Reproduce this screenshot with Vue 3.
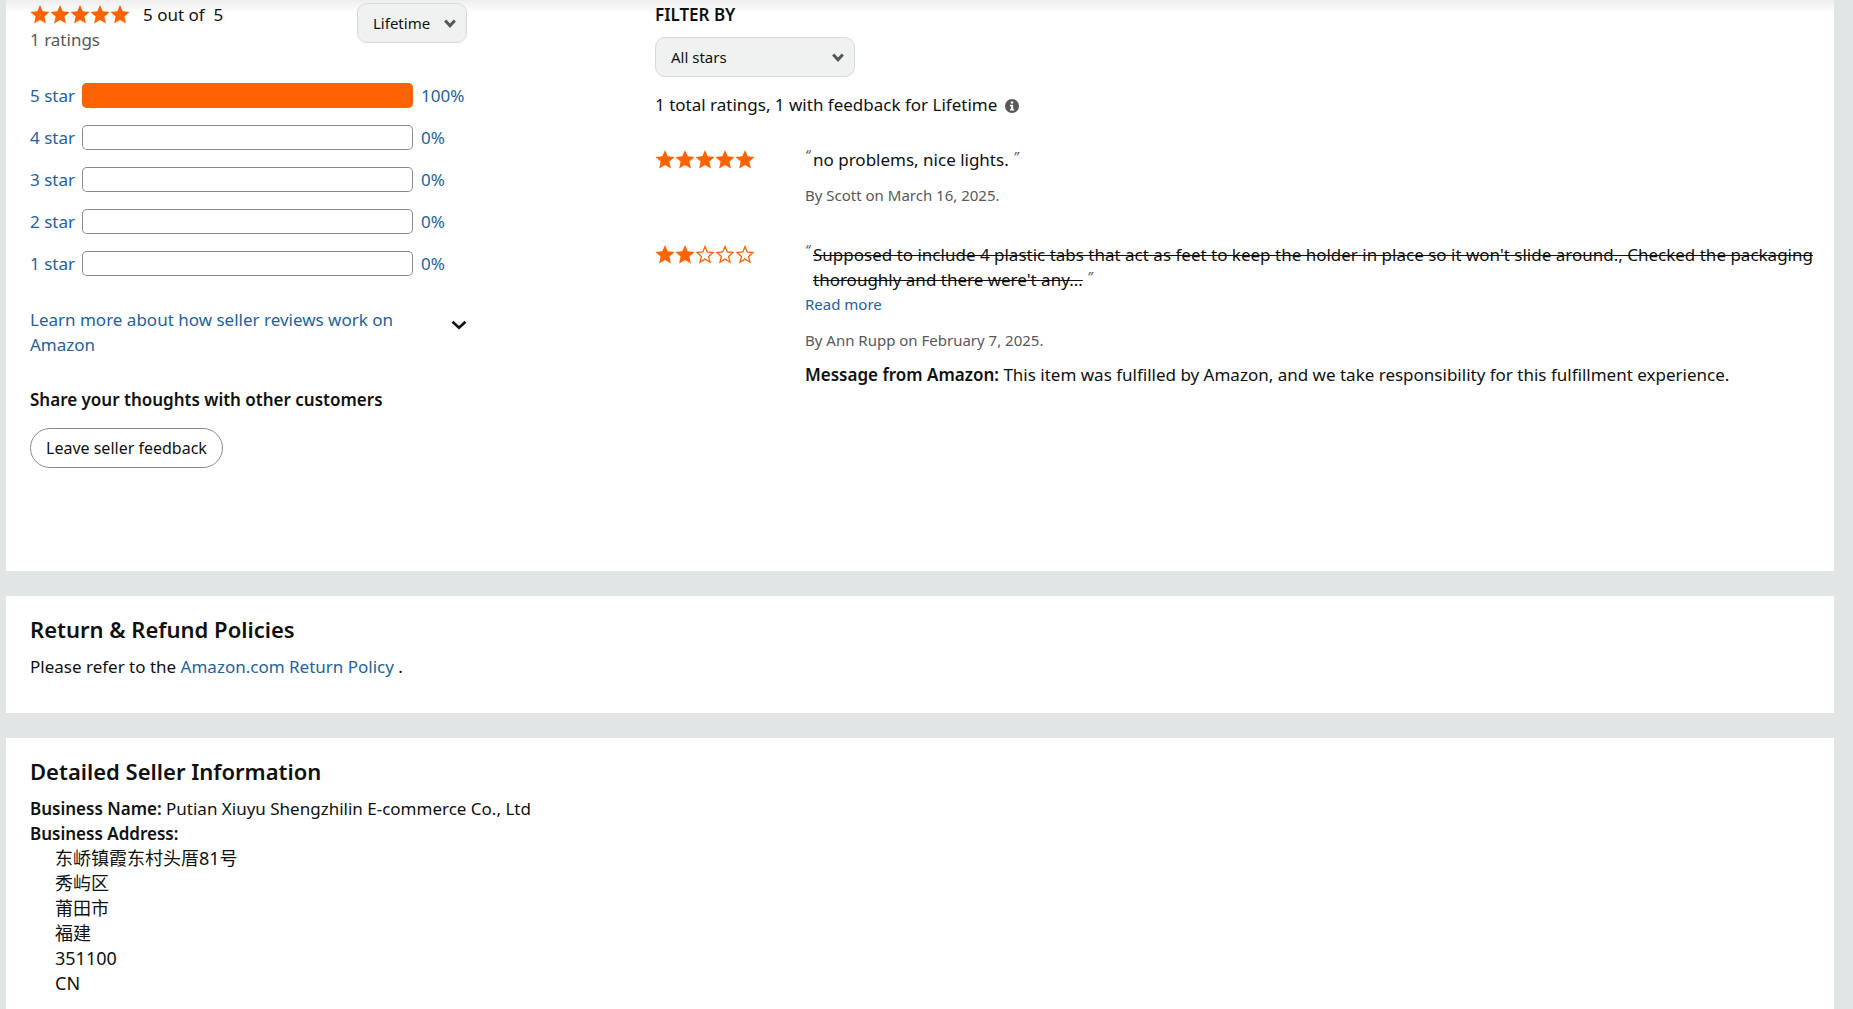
<script setup>
import { ref } from 'vue'

const period = ref('Lifetime')
const stars = ref('All stars')

const histogram = [
  { label: '5 star', percent: 100 },
  { label: '4 star', percent: 0 },
  { label: '3 star', percent: 0 },
  { label: '2 star', percent: 0 },
  { label: '1 star', percent: 0 },
]

const reviews = [
  {
    rating: 5,
    text: 'no problems, nice lights.',
    byline: 'By Scott on March 16, 2025.',
  },
  {
    rating: 2,
    struck: true,
    text: "Supposed to include 4 plastic tabs that act as feet to keep the holder in place so it won't slide around., Checked the packaging thoroughly and there were't any...",
    more: true,
    byline: 'By Ann Rupp on February 7, 2025.',
    message: 'This item was fulfilled by Amazon, and we take responsibility for this fulfillment experience.',
  },
]

const address = ['东峤镇霞东村头厝81号', '秀屿区', '莆田市', '福建', '351100', 'CN']

const starPath = 'M10 0 L12.7 6.3 L19.6 7 L14.4 11.6 L15.9 18.4 L10 14.9 L4.1 18.4 L5.6 11.6 L0.4 7 L7.3 6.3 Z'
const starOutline = 'M10 1.5 L12.2 7 L18 7.6 L13.6 11.4 L15 17.2 L10 14.1 L5 17.2 L6.4 11.4 L2 7.6 L7.8 7 Z'
</script>

<template>
  <div class="page">
    <div class="top-shadow"></div>

    <section class="card feedback">
      <div class="summary">
        <div class="summary-head">
          <div>
            <div class="score">
              <span class="stars" role="img" aria-label="5 out of 5 stars">
                <svg v-for="n in 5" :key="n" viewBox="0 0 20 20"><path class="full" :d="starPath" /></svg>
              </span>
              <span>5 out of &nbsp;5</span>
            </div>
            <div class="count">1 ratings</div>
          </div>
          <div class="select period">
            <select v-model="period" aria-label="Rating period">
              <option>Lifetime</option>
              <option>30 days</option>
              <option>90 days</option>
              <option>12 months</option>
            </select>
            <svg class="caret" viewBox="0 0 12 9"><path d="M1.2 1.5 L6 6.8 L10.8 1.5" /></svg>
          </div>
        </div>

        <ul class="histogram">
          <li v-for="row in histogram" :key="row.label">
            <a href="#">
              <span class="label">{{ row.label }}</span>
              <span class="track"><span class="fill" :style="{ width: row.percent + '%' }"></span></span>
              <span class="percent">{{ row.percent }}%</span>
            </a>
          </li>
        </ul>

        <a class="learn" href="#">
          <span>Learn more about how seller reviews work on Amazon</span>
          <svg viewBox="0 0 16 10"><path d="M1.5 1.7 L8 7.7 L14.5 1.7" /></svg>
        </a>

        <h4 class="share">Share your thoughts with other customers</h4>
        <button class="leave" type="button">Leave seller feedback</button>
      </div>

      <div class="list">
        <label class="filter-label" for="star-filter">FILTER BY</label>
        <div class="select star-filter">
          <select id="star-filter" v-model="stars">
            <option>All stars</option>
            <option>5 star</option>
            <option>4 star</option>
            <option>3 star</option>
            <option>2 star</option>
            <option>1 star</option>
          </select>
          <svg class="caret" viewBox="0 0 12 9"><path d="M1.2 1.5 L6 6.8 L10.8 1.5" /></svg>
        </div>
        <p class="total">
          <span>1 total ratings, 1 with feedback for Lifetime</span>
          <svg class="info" viewBox="0 0 14 14">
            <circle cx="7" cy="7" r="7" />
            <path d="M5.8 2.4h2.4v2.2H5.8z M5 5.8h3.2v4.4h1v1.4H4.9v-1.4h1V7.2H5z" />
          </svg>
        </p>

        <article v-for="review in reviews" :key="review.byline" class="review">
          <span class="stars" role="img" :aria-label="review.rating + ' out of 5 stars'">
            <svg v-for="n in 5" :key="n" viewBox="0 0 20 20">
              <path v-if="n <= review.rating" class="full" :d="starPath" />
              <path v-else class="empty" :d="starOutline" />
            </svg>
          </span>
          <div>
            <div class="quote">
              <span class="mark">“</span>
              <p><span :class="{ struck: review.struck }">{{ review.text }}</span> <span class="mark close">”</span></p>
            </div>
            <a v-if="review.more" class="more" href="#">Read more</a>
            <p class="byline">{{ review.byline }}</p>
            <p v-if="review.message" class="message"><b>Message from Amazon:</b> {{ review.message }}</p>
          </div>
        </article>
      </div>
    </section>

    <section class="card">
      <h3>Return &amp; Refund Policies</h3>
      <p>Please refer to the <a href="#">Amazon.com Return Policy</a> .</p>
    </section>

    <section class="card seller">
      <h3>Detailed Seller Information</h3>
      <p><b>Business Name:</b> Putian Xiuyu Shengzhilin E-commerce Co., Ltd</p>
      <p><b>Business Address:</b></p>
      <address>
        <div v-for="line in address" :key="line">{{ line }}</div>
      </address>
    </section>
  </div>
</template>

<style>
body {
  background: #e1e5e5;
}
</style>

<style scoped>
.page {
  position: relative;
  display: flex;
  flex-direction: column;
  gap: 25px;
  box-sizing: border-box;
  min-height: 100vh;
  padding: 0 19px 0 6px;
  background: #e1e5e5;
  color: #0f1111;
  font: 17px/25px "Noto Sans", "Noto Sans CJK SC", sans-serif;
}

.top-shadow {
  position: absolute;
  top: 0;
  left: 6px;
  right: 19px;
  height: 14px;
  background: linear-gradient(rgba(15, 17, 17, 0.07), rgba(15, 17, 17, 0));
  pointer-events: none;
}

p,
h3,
h4,
ul {
  margin: 0;
  padding: 0;
}

a {
  color: #2162a1;
  text-decoration: none;
}

b,
h3,
h4,
.filter-label {
  font-weight: 600;
}

h3 {
  margin-bottom: 10px;
  font-size: 22px;
  line-height: 30px;
}

h4 {
  font-size: 17px;
}

.card {
  padding: 18px 20px 34px 24px;
  background: #fff;
}

.seller {
  flex: 1;
  padding-bottom: 12px;
}

.feedback {
  display: flex;
  gap: 188px;
  padding-top: 2px;
  padding-bottom: 103px;
}

.summary {
  flex: none;
  width: 437px;
}

.list {
  flex: 1;
  min-width: 0;
}

.summary-head {
  display: flex;
  justify-content: space-between;
  align-items: flex-start;
}

.score {
  display: flex;
  align-items: center;
  gap: 13px;
}

.count {
  color: #565959;
}

.stars {
  display: flex;
  align-items: center;
  height: 25px;
}

.stars svg {
  width: 20px;
  height: 20px;
}

.full {
  fill: #ff6200;
}

.empty {
  fill: none;
  stroke: #ff6200;
  stroke-width: 1.3;
}

.select {
  position: relative;
}

.select select {
  display: block;
  box-sizing: border-box;
  width: 100%;
  height: 40px;
  padding: 0 30px 0 15px;
  border: 1px solid #d5d9d9;
  border-radius: 10px;
  appearance: none;
  background: #f0f2f2;
  color: #0f1111;
  font: inherit;
  font-size: 15px;
}

.caret {
  position: absolute;
  top: 16px;
  right: 11px;
  width: 12px;
  height: 9px;
  fill: none;
  stroke: #565959;
  stroke-width: 3;
  pointer-events: none;
}

.period {
  width: 110px;
  margin-top: 1px;
}

.star-filter {
  width: 200px;
  margin: 10px 0 15px;
}

.histogram {
  display: grid;
  gap: 17px;
  margin: 31px 0 31px;
  list-style: none;
}

.histogram a {
  display: flex;
}

.label {
  width: 52px;
}

.track {
  flex: 1;
  overflow: hidden;
  border-radius: 5px;
  box-shadow: inset 0 0 0 1px #888c8c;
}

.fill {
  display: block;
  height: 100%;
  background: #ff6200;
}

.percent {
  width: 46px;
  padding-left: 8px;
}

.learn {
  display: flex;
  justify-content: space-between;
  align-items: flex-start;
}

.learn span {
  width: 380px;
}

.learn svg {
  width: 16px;
  height: 10px;
  margin-top: 13px;
  fill: none;
  stroke: #0f1111;
  stroke-width: 2.6;
}

.share {
  margin: 30px 0 16px;
}

.leave {
  height: 40px;
  padding: 0 15px;
  border: 1px solid #888c8c;
  border-radius: 20px;
  background: #fff;
  color: #0f1111;
  font: inherit;
  font-size: 16px;
}

.filter-label {
  display: block;
}

.total {
  display: flex;
  align-items: center;
  gap: 8px;
  margin-bottom: 30px;
}

.info {
  width: 14px;
  height: 14px;
  margin-top: 3px;
  fill: #565959;
}

.info path {
  fill: #fff;
}

.review {
  display: grid;
  grid-template-columns: 150px 1fr;
  margin-bottom: 37px;
}

.quote {
  display: flex;
}

.mark {
  flex: none;
  width: 8px;
  color: #565959;
  font-size: 14px;
  font-style: italic;
  line-height: 16px;
}

.close {
  line-height: 0;
  vertical-align: 4px;
}

.struck {
  text-decoration: line-through;
  text-decoration-thickness: 1px;
}

.more {
  display: block;
  font-size: 15px;
}

.byline {
  margin-top: 13px;
  color: #565959;
  font-size: 15px;
  line-height: 20px;
}

.message {
  margin-top: 12px;
}

address {
  padding-left: 25px;
  font-size: 18px;
  font-style: normal;
}
</style>
